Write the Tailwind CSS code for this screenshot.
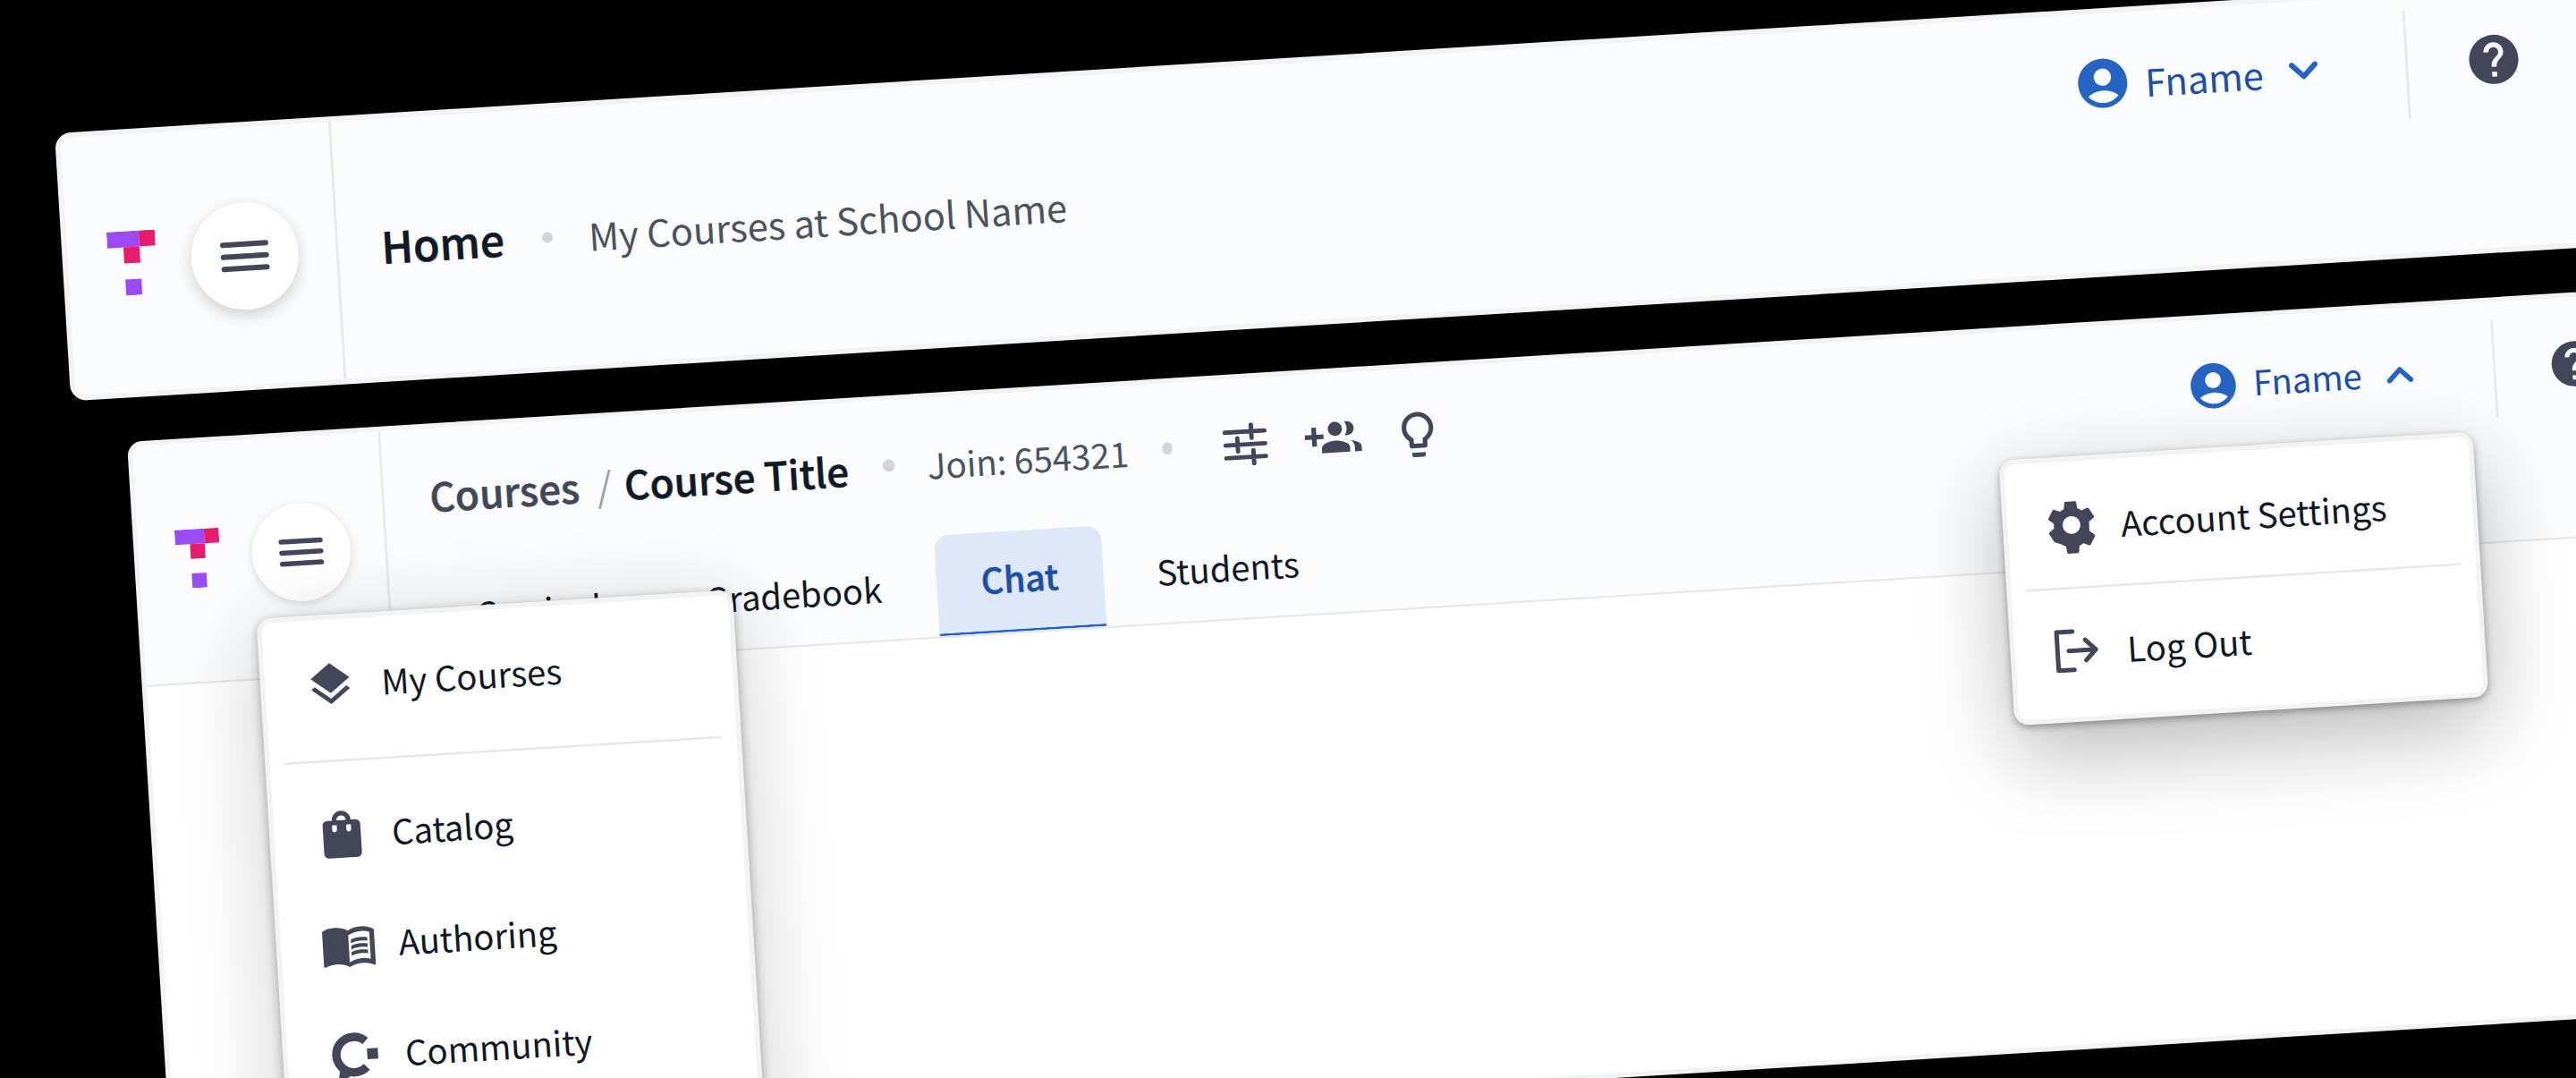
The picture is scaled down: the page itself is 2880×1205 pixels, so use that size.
<!DOCTYPE html>
<html lang="en">
<head>
    <meta charset="UTF-8">
    <meta name="viewport" content="width=device-width, initial-scale=1.0">
    <title>Navigation Header Tilted Preview</title>
    <script src="https://cdn.jsdelivr.net/npm/@tailwindcss/browser@4"></script>
</head>
<body class="bg-black">
<div class="relative w-[2880px] h-[1205px] overflow-hidden bg-black font-['Noto_Sans_CJK_SC','Noto_Sans',sans-serif]">

    <!-- top window: closed menus -->
    <div class="absolute left-[60.5px] top-[148.8px] w-[1000px] h-[100px] origin-top-left rotate-[-3.5deg] scale-[3] flex rounded-[6px] border-[2.5px] border-[#f2f3f4] bg-[#fbfcfe]">
        <div class="w-[100.5px] shrink-0 flex items-center pl-[15.3px] gap-[13px] border-r border-[#e9eaec]">
            <svg class="w-[18px] h-[24px]" viewBox="0 0 18 24"><rect width="12" height="6" fill="#9a4bf5"/><rect x="12" width="6" height="6" fill="#e81c6f"/><rect x="6" y="6" width="6" height="6" fill="#e81c6f"/><rect x="6" y="18" width="6" height="6" fill="#9a4bf5"/></svg>
            <div class="w-[40px] h-[40px] rounded-full bg-white flex items-center justify-center shadow-[0_2px_6px_rgba(0,0,0,0.18)]">
                <svg class="w-[24px] h-[24px]" viewBox="0 0 24 24" fill="none" stroke="#414759" stroke-width="2" stroke-linecap="round"><path d="M4 7.5h16M4 12h16M4 16.5h16"/></svg>
            </div>
        </div>
        <div class="flex-1 flex justify-between pl-[16.5px] pr-[78px]">
            <div class="self-center flex items-center">
                <span class="pb-[1.5px] text-[16px] font-medium text-[#111827] [-webkit-text-stroke:0.2px_currentColor]">Home</span>
                <span class="w-[4.5px] h-[4.5px] rounded-full bg-[#d1d5db] ml-[14px] mr-[13px]"></span>
                <span class="pt-[1px] text-[13.9px] text-[#4b5260]">My Courses at School Name</span>
            </div>
            <div class="self-start h-[52px] flex items-center">
                <svg class="w-[22px] h-[22px] fill-[#2563c4]" viewBox="0 0 24 24"><path d="M12 2C6.48 2 2 6.48 2 12s4.48 10 10 10 10-4.48 10-10S17.52 2 12 2zm0 4c1.93 0 3.5 1.57 3.5 3.5S13.93 13 12 13s-3.5-1.57-3.5-3.5S10.07 6 12 6zm0 14c-2.03 0-4.43-.82-6.14-2.88C7.55 15.8 9.68 15 12 15s4.45.8 6.14 2.12C16.43 19.18 14.03 20 12 20z"/></svg>
                <span class="ml-[5px] text-[13.9px] text-[#1d4fa3]">Fname</span>
                <svg class="ml-[7px] w-[16px] h-[16px]" viewBox="0 0 24 24" fill="none" stroke="#2563c4" stroke-width="3" stroke-linecap="round" stroke-linejoin="round"><path d="M5.5 8.5l6.5 6.5 6.5-6.5"/></svg>
                <div class="ml-[30px] w-px h-[40px] bg-[#e9eaec]"></div>
                <svg class="ml-[21px] w-[22px] h-[22px] fill-[#414759]" viewBox="0 0 24 24"><path d="M12 2C6.48 2 2 6.48 2 12s4.48 10 10 10 10-4.48 10-10S17.52 2 12 2zm1 17h-2v-2h2v2zm2.07-7.75l-.9.92C13.45 12.9 13 13.5 13 15h-2v-.5c0-1.1.45-2.1 1.17-2.83l1.24-1.26c.37-.36.59-.86.59-1.41 0-1.1-.9-2-2-2s-2 .9-2 2H8c0-2.21 1.79-4 4-4s4 1.79 4 4c0 .88-.36 1.68-.93 2.25z"/></svg>
            </div>
        </div>
    </div>

    <!-- bottom window: both menus open -->
    <div class="absolute left-[141.8px] top-[494px] w-[1100px] h-[295px] origin-top-left rotate-[-3.5deg] scale-[2.75] rounded-[6px] border-[2.5px] border-[#f2f3f4] bg-white">
        <div class="h-[97.5px] flex border-b border-[#e9eaec] bg-[#fbfcfe] rounded-t-[4px]">
            <div class="w-[100.8px] shrink-0 flex items-center pl-[15px] pb-[2px] gap-[13px] border-r border-[#e9eaec]">
                <svg class="w-[18px] h-[24px]" viewBox="0 0 18 24"><rect width="12" height="6" fill="#9a4bf5"/><rect x="12" width="6" height="6" fill="#e81c6f"/><rect x="6" y="6" width="6" height="6" fill="#e81c6f"/><rect x="6" y="18" width="6" height="6" fill="#9a4bf5"/></svg>
                <div class="w-[40px] h-[40px] rounded-full bg-white flex items-center justify-center shadow-[0_1px_4px_rgba(0,0,0,0.14)]">
                    <svg class="w-[24px] h-[24px]" viewBox="0 0 24 24" fill="none" stroke="#414759" stroke-width="2" stroke-linecap="round"><path d="M4 7.5h16M4 12h16M4 16.5h16"/></svg>
                </div>
            </div>
            <div class="flex-1 flex flex-col justify-between">
                <div class="h-[53px] flex items-center pl-[18.7px] pr-[92.5px]">
                    <span class="pt-[1px] text-[16px] font-medium text-[#414759] [-webkit-text-stroke:0.2px_currentColor]">Courses</span>
                    <span class="pt-[1px] ml-[7px] mr-[5px] text-[16px] text-[#9ca3af]">/</span>
                    <span class="pt-[1px] text-[16px] font-medium text-[#111827] [-webkit-text-stroke:0.2px_currentColor]">Course Title</span>
                    <span class="w-[4.5px] h-[4.5px] rounded-full bg-[#d1d5db] ml-[14px] mr-[13.5px]"></span>
                    <span class="pt-[1px] text-[14px] text-[#4b5260]">Join: 654321</span>
                    <span class="w-[4.5px] h-[4.5px] rounded-full bg-[#d1d5db] ml-[13.5px] mr-[18.5px]"></span>
                    <svg class="w-[21.5px] h-[21.5px]" viewBox="0 0 24 24" fill="none" stroke="#414759" stroke-width="2" stroke-linecap="round"><path d="M3 6.2h18M3 12h18M3 17.8h18M15 3.2v6M8.5 9v6M15.5 14.8v6"/></svg>
                    <svg class="ml-[13.5px] w-[23px] h-[23px] fill-[#414759]" viewBox="0 0 24 24"><path d="M8 10H5V7H3v3H0v2h3v3h2v-3h3v-2zm10 1c1.66 0 2.99-1.34 2.99-3S19.66 5 18 5c-.32 0-.63.05-.93.14.57.81.9 1.79.9 2.86 0 1.07-.34 2.04-.9 2.86.3.09.61.14.93.14zm-5 0c1.66 0 3-1.34 3-3s-1.34-3-3-3-3 1.34-3 3 1.34 3 3 3zm6.62 2.16c.83.73 1.38 1.66 1.38 2.84v2h3v-2c0-1.54-2.37-2.49-4.38-2.84zM13 13c-2 0-6 1-6 3v2h12v-2c0-2-4-3-6-3z"/></svg>
                    <svg class="ml-[12.5px] w-[22px] h-[22px] fill-[#414759]" viewBox="0 0 24 24"><path d="M9 21c0 .55.45 1 1 1h4c.55 0 1-.45 1-1v-1H9v1zm3-19C8.14 2 5 5.14 5 9c0 2.38 1.19 4.47 3 5.74V17c0 .55.45 1 1 1h6c.55 0 1-.45 1-1v-2.26c1.81-1.27 3-3.36 3-5.74 0-3.86-3.14-7-7-7zm2.85 11.1l-.85.6V16h-4v-2.3l-.85-.6C7.8 12.16 7 10.63 7 9c0-2.76 2.24-5 5-5s5 2.24 5 5c0 1.63-.8 3.16-2.15 4.1z"/></svg>
                    <div class="ml-auto flex items-center">
                        <svg class="w-[22px] h-[22px] fill-[#2563c4]" viewBox="0 0 24 24"><path d="M12 2C6.48 2 2 6.48 2 12s4.48 10 10 10 10-4.48 10-10S17.52 2 12 2zm0 4c1.93 0 3.5 1.57 3.5 3.5S13.93 13 12 13s-3.5-1.57-3.5-3.5S10.07 6 12 6zm0 14c-2.03 0-4.43-.82-6.14-2.88C7.55 15.8 9.68 15 12 15s4.45.8 6.14 2.12C16.43 19.18 14.03 20 12 20z"/></svg>
                        <span class="ml-[5px] text-[13.9px] text-[#1d4fa3]">Fname</span>
                        <svg class="ml-[7px] w-[16px] h-[16px]" viewBox="0 0 24 24" fill="none" stroke="#2563c4" stroke-width="3" stroke-linecap="round" stroke-linejoin="round"><path d="M5.5 15.5l6.5-6.5 6.5 6.5"/></svg>
                        <div class="ml-[30px] w-px h-[40px] bg-[#e9eaec]"></div>
                        <svg class="ml-[21px] w-[22px] h-[22px] fill-[#414759]" viewBox="0 0 24 24"><path d="M12 2C6.48 2 2 6.48 2 12s4.48 10 10 10 10-4.48 10-10S17.52 2 12 2zm1 17h-2v-2h2v2zm2.07-7.75l-.9.92C13.45 12.9 13 13.5 13 15h-2v-.5c0-1.1.45-2.1 1.17-2.83l1.24-1.26c.37-.36.59-.86.59-1.41 0-1.1-.9-2-2-2s-2 .9-2 2H8c0-2.21 1.79-4 4-4s4 1.79 4 4c0 .88-.36 1.68-.93 2.25z"/></svg>
                    </div>
                </div>
                <div class="h-[41px] flex pl-[16.5px] text-[13.9px] text-[#111827]">
                    <div class="pl-[18px] flex items-center">Curriculum</div>
                    <div class="pl-[21px] pr-[18px] flex items-center">Gradebook</div>
                    <div class="ml-[4.5px] px-[18px] flex items-center text-[14.2px] font-medium text-[#1d4fa3] bg-[#dfe8f8] rounded-t-[6px] border-b-[1.5px] border-[#2563c4] [-webkit-text-stroke:0.2px_currentColor]">Chat</div>
                    <div class="ml-[4px] px-[18px] flex items-center">Students</div>
                </div>
            </div>
        </div>

        <!-- app menu -->
        <div class="absolute left-[46.3px] top-[72.5px] w-[193.4px] h-[240px] rounded-[6px] border-2 border-[#f2f3f4] bg-white shadow-[0_1px_4px_rgba(0,0,0,0.32),0_8px_36px_rgba(0,0,0,0.2)] text-[13.9px] text-[#111827]">
            <div class="h-[54px] mb-[3px] flex items-center pl-[16px] gap-[10px]">
                <svg class="w-[21px] h-[21px] fill-[#414759]" viewBox="0 0 24 24"><path d="M11.99 18.54l-7.37-5.73L3 14.07l9 7 9-7-1.63-1.27-7.38 5.74zM12 16l7.36-5.73L21 9l-9-7-9 7 1.63 1.27L12 16z"/></svg>
                <span>My Courses</span>
            </div>
            <div class="mx-[6px] h-px bg-[#e9eaec]"></div>
            <div class="pt-[7px]">
                <div class="h-[45px] flex items-center pl-[15.3px] gap-[9.2px]">
                    <svg class="w-[23px] h-[23px] fill-[#414759]" viewBox="0 0 24 24"><path d="M18 6h-2c0-2.21-1.79-4-4-4S8 3.79 8 6H6c-1.1 0-2 .9-2 2v12c0 1.1.9 2 2 2h12c1.1 0 2-.9 2-2V8c0-1.1-.9-2-2-2zm-8 4c0 .55-.45 1-1 1s-1-.45-1-1V8h2v2zm2-6c1.1 0 2 .9 2 2h-4c0-1.1.9-2 2-2zm4 6c0 .55-.45 1-1 1s-1-.45-1-1V8h2v2z"/></svg>
                    <span>Catalog</span>
                </div>
                <div class="h-[45px] flex items-center pl-[15.3px] gap-[9.2px]">
                    <svg class="w-[23px] h-[23px] fill-[#414759]" viewBox="0 0 24 24"><path d="M21 5c-1.11-.35-2.33-.5-3.5-.5-1.95 0-4.05.4-5.5 1.5-1.45-1.1-3.55-1.5-5.5-1.5S2.45 4.9 1 6v14.65c0 .25.25.5.5.5.1 0 .15-.05.25-.05C3.1 20.45 5.05 20 6.5 20c1.95 0 4.05.4 5.5 1.5 1.35-.85 3.8-1.5 5.5-1.5 1.65 0 3.35.3 4.75 1.05.1.05.15.05.25.05.25 0 .5-.25.5-.5V6c-.6-.45-1.25-.75-2-1zm0 13.5c-1.1-.35-2.3-.5-3.5-.5-1.7 0-4.15.65-5.5 1.5V8c1.35-.85 3.8-1.5 5.5-1.5 1.2 0 2.4.15 3.5.5v11.5z"/><path d="M17.5 10.5c.88 0 1.73.09 2.5.26V9.24c-.79-.15-1.64-.24-2.5-.24-1.7 0-3.24.29-4.5.83v1.66c1.13-.64 2.7-.99 4.5-.99zM13 12.49v1.66c1.13-.64 2.7-.99 4.5-.99.88 0 1.73.09 2.5.26V11.9c-.79-.15-1.64-.24-2.5-.24-1.7 0-3.24.3-4.5.83zM17.5 14.33c-1.7 0-3.24.29-4.5.83v1.66c1.13-.64 2.7-.99 4.5-.99.88 0 1.73.09 2.5.26v-1.52c-.79-.16-1.64-.24-2.5-.24z"/></svg>
                    <span>Authoring</span>
                </div>
                <div class="h-[45px] flex items-center pl-[15.3px] gap-[9.2px]">
                    <svg class="w-[23px] h-[23px]" viewBox="0 0 24 24"><path d="M16.5 6.2A7.5 7.5 0 1 0 16.5 17.2" fill="none" stroke="#414759" stroke-width="3.6"/><path d="M5.5 16L4 23.5l7-3.5z" fill="#414759"/><rect x="17" y="9.4" width="4.6" height="4.6" fill="#414759"/></svg>
                    <span>Community</span>
                </div>
            </div>
        </div>

        <!-- account menu -->
        <div class="absolute left-[756.5px] top-[51.9px] w-[193.5px] h-[108px] rounded-[6px] border-2 border-[#f2f3f4] bg-white shadow-[0_1px_3px_rgba(0,0,0,0.35),0_12px_34px_rgba(0,0,0,0.28)] text-[13.9px] text-[#111827]">
            <div class="h-[51.5px] flex items-center pl-[14px] gap-[8.5px]">
                <svg class="w-[24px] h-[24px] fill-[#414759]" viewBox="0 0 24 24"><path d="M19.14 12.94c.04-.3.06-.61.06-.94 0-.32-.02-.64-.07-.94l2.03-1.58c.18-.14.23-.41.12-.61l-1.92-3.32c-.12-.22-.37-.29-.59-.22l-2.39.96c-.5-.38-1.03-.7-1.62-.94l-.36-2.54c-.04-.24-.24-.41-.48-.41h-3.84c-.24 0-.43.17-.47.41l-.36 2.54c-.59.24-1.13.57-1.62.94l-2.39-.96c-.22-.08-.47 0-.59.22L2.74 8.87c-.12.21-.08.47.12.61l2.03 1.58c-.05.3-.09.63-.09.94s.02.64.07.94l-2.03 1.58c-.18.14-.23.41-.12.61l1.92 3.32c.12.22.37.29.59.22l2.39.96c.5.38 1.03.7 1.62.94l.36 2.54c.05.24.24.41.48.41h3.84c.24 0 .44-.17.47-.41l.36-2.54c.59-.24 1.13-.56 1.62-.94l2.39.96c.22.08.47 0 .59-.22l1.92-3.32c.12-.22.07-.47-.12-.61l-2.01-1.58zM12 15.6c-1.98 0-3.6-1.62-3.6-3.6s1.62-3.6 3.6-3.6 3.6 1.62 3.6 3.6-1.62 3.6-3.6 3.6z"/></svg>
                <span class="pt-[1px]">Account Settings</span>
            </div>
            <div class="mx-[6px] h-px bg-[#e9eaec]"></div>
            <div class="h-[50px] flex items-center pl-[14.6px] gap-[9.5px]">
                <svg class="w-[22px] h-[22px]" viewBox="0 0 24 24" fill="none" stroke="#414759" stroke-width="2" stroke-linecap="round" stroke-linejoin="round"><path d="M10.5 3.5H3.5v17h7"/><path d="M8.5 12H20.5M16 7.5l4.5 4.5-4.5 4.5"/></svg>
                <span>Log Out</span>
            </div>
        </div>
    </div>
</div>
</body>
</html>
